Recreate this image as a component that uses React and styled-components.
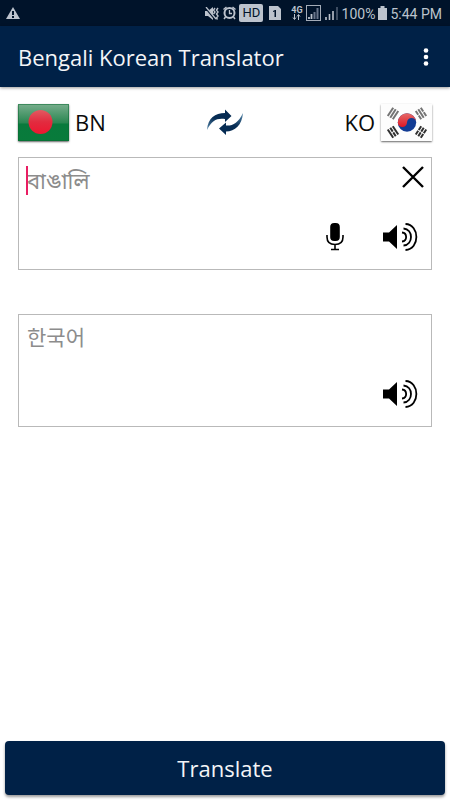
import React, { useState } from "react";
import styled, { createGlobalStyle } from "styled-components";

const GlobalStyle = createGlobalStyle`
  * { box-sizing: border-box; }
  html, body { margin: 0; padding: 0; background: #ffffff; }
  body { font-family: "Open Sans", "Noto Sans", "Noto Sans CJK KR", sans-serif; color: #0b0b0b; }
  button, textarea { font: inherit; }
  svg { display: block; flex: none; }
`;

const Screen = styled.div`
  display: flex;
  flex-direction: column;
  min-height: 100vh;
  background: #ffffff;
`;

const StatusBar = styled.div`
  display: flex;
  align-items: center;
  justify-content: space-between;
  height: 26px;
  padding: 0 8px 0 6px;
  background: #00132a;
  color: #bcc3cd;
  font-family: Roboto, sans-serif;
  font-size: 14px;
  line-height: 20px;
`;

const StatusGroup = styled.div`
  display: flex;
  align-items: center;
  gap: 3px;
  white-space: nowrap;
`;

const StatusText = styled.span`
  padding-top: 1px;
`;

const HdBadge = styled.span`
  width: 24px;
  height: 18px;
  border-radius: 2px;
  background: #bcc3cd;
  color: #00132a;
  font-size: 13px;
  line-height: 18px;
  text-align: center;
`;

const Network = styled.span`
  display: flex;
  flex-direction: column;
  align-items: center;
  margin-left: 4px;
  font-size: 9px;
  font-weight: 700;
  line-height: 8px;
`;

const AppBar = styled.header`
  display: flex;
  align-items: center;
  justify-content: space-between;
  height: 61px;
  padding: 0 12px 0 18px;
  background: #002147;
  color: #f4f5f7;
  box-shadow: 0 1px 3px rgba(0, 0, 0, 0.4);
`;

const Title = styled.h1`
  margin: 0;
  font-size: 22px;
  font-weight: 400;
  line-height: 32px;
  white-space: nowrap;
`;

const IconButton = styled.button`
  display: flex;
  align-items: center;
  justify-content: center;
  padding: 0;
  border: 0;
  background: transparent;
  color: ${(p) => p.$color || "#000000"};
  cursor: pointer;
`;

const Main = styled.main`
  display: flex;
  flex: 1;
  flex-direction: column;
  padding: 16px 18px;
`;

const LanguageRow = styled.div`
  display: grid;
  grid-template-columns: 1fr auto 1fr;
  align-items: center;
  height: 38px;
  margin-bottom: 16px;
`;

const LanguageButton = styled.button`
  display: flex;
  align-items: center;
  justify-self: ${(p) => (p.$end ? "end" : "start")};
  gap: 6px;
  padding: 0;
  border: 0;
  background: transparent;
  color: #0b0b0b;
  font-size: 22px;
  line-height: 32px;
  cursor: pointer;
`;

const Flag = styled.span`
  display: block;
  border-radius: 1px;
  box-shadow: 0 1px 2px rgba(0, 0, 0, 0.6);
`;

const Panel = styled.section`
  position: relative;
  display: flex;
  flex-direction: column;
  height: 113px;
  margin-bottom: 44px;
  padding: 8px 7px 18px 8px;
  border: 1px solid #b9b9b9;
`;

const PanelTop = styled.div`
  display: flex;
  flex: 1;
  align-items: flex-start;
`;

const TextArea = styled.textarea`
  flex: 1;
  min-width: 0;
  height: 32px;
  padding: 0;
  border: 0;
  outline: 0;
  resize: none;
  overflow: hidden;
  background: transparent;
  color: #0b0b0b;
  font-family: "Open Sans", "Noto Sans", "Noto Sans Bengali", "Noto Sans CJK KR", sans-serif;
  font-size: ${(p) => (p.lang === "ko" ? 21 : 22)}px;
  line-height: 28px;
  caret-color: #e91e63;
  &::placeholder { color: #8c8c8c; opacity: 1; }
`;

const Caret = styled.span`
  position: absolute;
  top: 8px;
  left: 7px;
  width: 2px;
  height: 29px;
  background: #e91e63;
`;

const PanelActions = styled.div`
  display: flex;
  align-items: center;
  justify-content: flex-end;
  gap: 38px;
  padding-right: 6px;
`;

const Footer = styled.footer`
  padding: 5px;
`;

const TranslateButton = styled.button`
  display: block;
  width: 100%;
  height: 54px;
  padding: 0;
  border: 0;
  border-radius: 4px;
  background: #002147;
  color: #f4f5f7;
  font-size: 22px;
  line-height: 32px;
  box-shadow: 0 2px 3px rgba(0, 0, 0, 0.4);
  cursor: pointer;
`;

const WarningIcon = () => (
  <svg width="14" height="12" viewBox="0 0 14 12">
    <path d="M7 0 14 12H0Z" fill="#bcc3cd" />
    <path d="M6 4h2v4H6ZM6 9h2v2H6Z" fill="#00132a" />
  </svg>
);

const MuteIcon = () => (
  <svg width="15" height="13" viewBox="0 0 15 13">
    <path d="M0 4h3l5-4v13L3 9H0Z" fill="#bcc3cd" />
    <path d="M0 0 10 12" stroke="#00132a" strokeWidth="2" />
    <path d="M1 0 11 12" stroke="#bcc3cd" strokeWidth="1.3" />
    <path d="m10 1-1.500 2L10 5 8.500 7M13 1l-1.500 2L13 5l-1.500 2L13 9l-1.500 2 1 1.500" fill="none" stroke="#bcc3cd" strokeWidth="1.400" />
  </svg>
);

const AlarmIcon = () => (
  <svg width="13" height="14" viewBox="0 0 13 14">
    <circle cx="6.5" cy="7" r="5" fill="none" stroke="#bcc3cd" strokeWidth="2" />
    <path d="M0.500 3.500 3.500 1M12.500 3.500 9.500 1M2.500 11 1 13M10.500 11 12 13" stroke="#bcc3cd" strokeWidth="1.500" />
    <path d="M6.500 4v3.500H9" fill="none" stroke="#bcc3cd" strokeWidth="1.300" />
  </svg>
);

const SimIcon = () => (
  <svg width="18" height="14" viewBox="0 0 18 14">
    <path d="M3 0h9l3 3v11H3Z" fill="#bcc3cd" />
    <path d="m7 5 2-1h1v7H8.500V5.500L7 6Z" fill="#00132a" />
  </svg>
);

const DataArrows = () => (
  <svg width="9" height="6" viewBox="0 0 9 6">
    <path d="M2.500 0v5M1 3.500l1.500 2L4 3.500M6.500 6V1M5 2.500l1.500-2L8 2.500" fill="none" stroke="#bcc3cd" />
  </svg>
);

const BoxedSignal = () => (
  <svg width="15" height="16" viewBox="0 0 15 16">
    <rect x="0.5" y="0.5" width="14" height="15" fill="none" stroke="#a4acb8" />
    <path d="M3 12v2M5.500 9v5" stroke="#bcc3cd" strokeWidth="1.800" />
    <path d="M8.500 7v7M11.500 3v11" stroke="#68758a" strokeWidth="2" />
  </svg>
);

const Signal = () => (
  <svg width="15" height="14" viewBox="0 0 15 14">
    <path d="M2 11v3M5.500 8v6M9 5v9" stroke="#bcc3cd" strokeWidth="1.600" />
    <path d="M13 1v13" stroke="#526074" strokeWidth="1.500" />
  </svg>
);

const BatteryIcon = () => (
  <svg width="9" height="14" viewBox="0 0 9 14">
    <path d="M2.500 0h4v2H9v12H0V2h2.500Z" fill="#bcc3cd" />
  </svg>
);

const MoreIcon = () => (
  <svg width="24" height="32" viewBox="0 0 24 32" fill="currentColor">
    <circle cx="12" cy="9.500" r="2.300" />
    <circle cx="12" cy="16" r="2.300" />
    <circle cx="12" cy="22.500" r="2.300" />
  </svg>
);

const BangladeshFlag = () => (
  <svg width="51" height="37" viewBox="0 0 51 37">
    <defs>
      <linearGradient id="bdGreen" x2="0" y2="1">
        <stop offset="0" stopColor="#78ae8d" />
        <stop offset="0.5" stopColor="#2b8752" />
        <stop offset="0.55" stopColor="#087a3c" />
        <stop offset="1" stopColor="#087b3b" />
      </linearGradient>
      <linearGradient id="bdRed" x2="0" y2="1">
        <stop offset="0" stopColor="#e25a61" />
        <stop offset="0.5" stopColor="#e22b3f" />
        <stop offset="1" stopColor="#ed1730" />
      </linearGradient>
    </defs>
    <rect width="51" height="37" fill="url(#bdGreen)" />
    <rect x="0.5" y="0.5" width="50" height="36" fill="none" stroke="#06672f" strokeOpacity="0.5" />
    <circle cx="22.500" cy="18" r="12" fill="url(#bdRed)" />
  </svg>
);

const trigrams = [
  { x: 12, y: 9.5, angle: -57, broken: [] },
  { x: 40, y: 9.5, angle: 57, broken: [-3, 3] },
  { x: 12, y: 28, angle: 57, broken: [0] },
  { x: 40, y: 28, angle: -57, broken: [-3, 0, 3] },
];

const KoreaFlag = () => (
  <svg width="51" height="37" viewBox="0 0 51 37">
    <defs>
      <linearGradient id="krRed" x2="0" y2="1">
        <stop offset="0" stopColor="#e56a6a" />
        <stop offset="1" stopColor="#df1724" />
      </linearGradient>
    </defs>
    <rect width="51" height="37" fill="#fdfdfd" />
    {trigrams.map(({ x, y, angle, broken }, i) => (
      <g key={i} transform={`translate(${x} ${y}) rotate(${angle})`} stroke={i < 2 ? "#747474" : "#303030"} strokeWidth="2">
        {[-3, 0, 3].map((row) => (
          <path key={row} d={broken.includes(row) ? `M-5 ${row}H-0.500M0.500 ${row}H5` : `M-5 ${row}H5`} />
        ))}
      </g>
    ))}
    <circle cx="26" cy="18.500" r="9.200" fill="#123c94" />
    <path d="M16.800 18.500A9.200 9.200 0 0 1 35.200 18.500A4.600 4.600 0 0 0 26 18.500A4.600 4.600 0 0 1 16.800 18.500Z" fill="url(#krRed)" />
  </svg>
);

const SwapIcon = () => (
  <svg width="36" height="27" viewBox="0 0 36 27">
    <defs>
      <linearGradient id="swapLeft" x1="0" y1="1" x2="0.5" y2="0">
        <stop offset="0" stopColor="#5789ad" />
        <stop offset="0.6" stopColor="#062c53" />
      </linearGradient>
      <linearGradient id="swapRight" x1="1" y1="0" x2="0.5" y2="1">
        <stop offset="0" stopColor="#5789ad" />
        <stop offset="0.6" stopColor="#062c53" />
      </linearGradient>
    </defs>
    <path d="M0 21C1 9 8 4 18 4V0.500l6.500 6.500-6.500 6v-3C10 9 5 11 0 21Z" fill="url(#swapLeft)" />
    <path d="M36 4C35 16 28 22.500 19 22.500V26l-7-6.500 7-6v3C26 17 31 14 36 4Z" fill="url(#swapRight)" />
  </svg>
);

const CloseIcon = () => (
  <svg width="22" height="22" viewBox="0 0 22 22">
    <path d="m1 1 20 20M21 1 1 21" stroke="currentColor" strokeWidth="2.400" />
  </svg>
);

const MicIcon = () => (
  <svg width="18" height="28" viewBox="0 0 18 28">
    <rect x="4.200" y="0" width="9.600" height="18" rx="4" fill="currentColor" />
    <path d="M1 12v2c0 5 3 7.500 8 7.500s8-2.500 8-7.500v-2M9 21.500V26.500M5 26.500h8" fill="none" stroke="currentColor" strokeWidth="1.600" />
  </svg>
);

const SpeakerIcon = () => (
  <svg width="36" height="28" viewBox="0 0 36 28">
    <path d="M1 9.500h6L15 2v24l-8-7.500H1Z" fill="currentColor" />
    <path d="M20 9.500C25.500 10 25.500 18 20 18.500M21.500 5.500C31.500 6 31.500 22 21.500 22.500M23.500 1C38 1.500 38 26.500 23.500 27" fill="none" stroke="currentColor" strokeWidth="1.800" />
  </svg>
);

export default function App() {
  const [text, setText] = useState("");
  return (
    <Screen>
      <GlobalStyle />
      <StatusBar>
        <WarningIcon />
        <StatusGroup>
          <MuteIcon />
          <AlarmIcon />
          <HdBadge>HD</HdBadge>
          <SimIcon />
          <Network>4G<DataArrows /></Network>
          <BoxedSignal />
          <Signal />
          <StatusText>100%</StatusText>
          <BatteryIcon />
          <StatusText>5:44 PM</StatusText>
        </StatusGroup>
      </StatusBar>
      <AppBar>
        <Title>Bengali Korean Translator</Title>
        <IconButton $color="#ffffff" aria-label="More options"><MoreIcon /></IconButton>
      </AppBar>
      <Main>
        <LanguageRow>
          <LanguageButton>
            <Flag><BangladeshFlag /></Flag>
            BN
          </LanguageButton>
          <IconButton aria-label="Swap languages"><SwapIcon /></IconButton>
          <LanguageButton $end>
            KO
            <Flag><KoreaFlag /></Flag>
          </LanguageButton>
        </LanguageRow>
        <Panel>
          <PanelTop>
            <TextArea lang="bn" aria-label="Bengali text" placeholder="বাঙালি" rows={1} value={text} onChange={(e) => setText(e.target.value)} />
            {!text && <Caret />}
            <IconButton aria-label="Clear text" onClick={() => setText("")}><CloseIcon /></IconButton>
          </PanelTop>
          <PanelActions>
            <IconButton aria-label="Speak"><MicIcon /></IconButton>
            <IconButton aria-label="Listen to Bengali"><SpeakerIcon /></IconButton>
          </PanelActions>
        </Panel>
        <Panel>
          <PanelTop>
            <TextArea lang="ko" aria-label="Korean translation" placeholder="한국어" rows={1} readOnly />
          </PanelTop>
          <PanelActions>
            <IconButton aria-label="Listen to Korean"><SpeakerIcon /></IconButton>
          </PanelActions>
        </Panel>
      </Main>
      <Footer>
        <TranslateButton>Translate</TranslateButton>
      </Footer>
    </Screen>
  );
}
